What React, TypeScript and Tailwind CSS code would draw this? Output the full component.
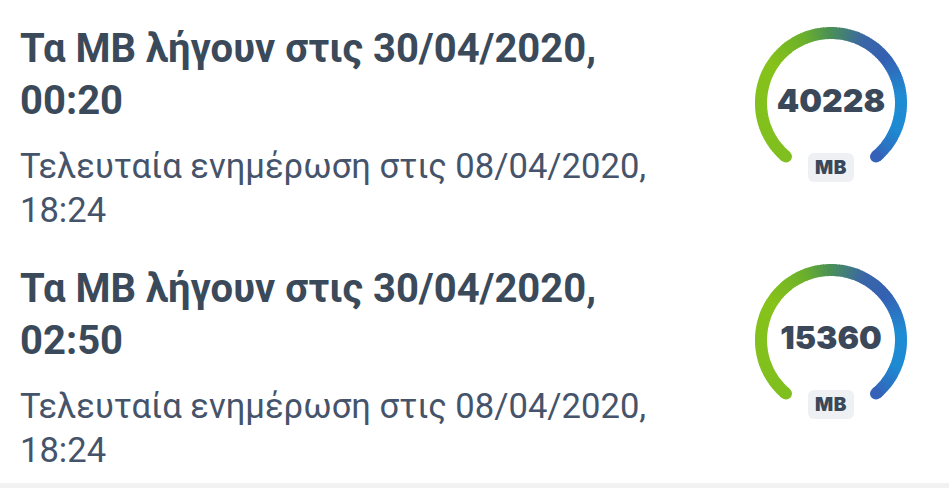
const stops: [number, number[]][] = [
  [0, [127, 191, 31]],
  [0.3, [134, 194, 26]],
  [0.42, [107, 176, 43]],
  [0.5, [74, 143, 88]],
  [0.6, [58, 102, 168]],
  [0.68, [53, 96, 178]],
  [0.8, [30, 140, 212]],
  [0.9, [29, 138, 210]],
  [1, [53, 98, 184]],
];

function colorAt(t: number) {
  for (let i = 1; i < stops.length; i++) {
    const [t1, c1] = stops[i];
    const [t0, c0] = stops[i - 1];
    if (t <= t1) {
      const k = (t - t0) / (t1 - t0);
      const c = c0.map((v, j) => Math.round(v + (c1[j] - v) * k));
      return `rgb(${c[0]},${c[1]},${c[2]})`;
    }
  }
  return 'rgb(53,98,184)';
}

const Gauge = ({ value, top }: { value: string; top: string }) => {
  const cx = 80;
  const cy = 80;
  const r = 70;
  const start = -140;
  const sweep = 280;
  const n = 140;
  const pt = (deg: number) => {
    const a = (deg * Math.PI) / 180;
    return [cx + r * Math.sin(a), cy - r * Math.cos(a)];
  };
  const segs = [];
  for (let i = 0; i < n; i++) {
    const a0 = start + (sweep * i) / n;
    const a1 = start + (sweep * (i + 1)) / n + 0.6;
    const [x0, y0] = pt(a0);
    const [x1, y1] = pt(Math.min(a1, start + sweep));
    segs.push(
      <path
        key={i}
        d={`M ${x0} ${y0} A ${r} ${r} 0 0 1 ${x1} ${y1}`}
        stroke={colorAt((i + 0.5) / n)}
        strokeWidth={12}
        fill="none"
      />
    );
  }
  const [sx, sy] = pt(start);
  const [ex, ey] = pt(start + sweep);

  return (
    <div className={`relative mr-[38px] h-[160px] w-[160px] shrink-0 ${top}`}>
      <svg width="160" height="160" viewBox="0 0 160 160">
        {segs}
        <circle cx={sx} cy={sy} r={6} fill={colorAt(0)} />
        <circle cx={ex} cy={ey} r={6} fill={colorAt(1)} />
      </svg>
      <div className="absolute inset-0 flex items-center justify-center">
        <span className="-translate-y-[2px] font-['Inter',sans-serif] text-[32px] leading-none font-black text-[#3a4859]">
          {value}
        </span>
      </div>
      <div className="absolute top-[130px] left-1/2 flex h-[29px] w-[46px] -translate-x-1/2 items-center justify-center rounded-md bg-[#eef0f3] font-['Inter',sans-serif] text-[19px] leading-none font-black tracking-[0.5px] text-[#3a4859]">
        MB
      </div>
    </div>
  );
};

const Row = ({ expires, value, top }: { expires: string; value: string; top: string }) => (
  <div className="flex h-[240px] items-start justify-between">
    <div className="w-[680px] pt-[23px] pl-[20px] text-[#3b4a5a] font-['Roboto',sans-serif]">
      <div className="text-[40px] leading-[52px] font-bold">Τα MB λήγουν στις {expires}</div>
      <div className="mt-[17px] text-[34.6px] leading-[44px] text-[#45546a]">
        Τελευταία ενημέρωση στις 08/04/2020, 18:24
      </div>
    </div>
    <Gauge value={value} top={top} />
  </div>
);

export default function App() {
  return (
    <div className="h-[488px] w-[949px] overflow-hidden bg-white">
      <Row expires="30/04/2020, 00:20" value="40228" top="mt-[23px]" />
      <Row expires="30/04/2020, 02:50" value="15360" top="mt-[20px]" />
      <div className="mt-[3px] h-[5px] bg-[#f2f2f2]" />
    </div>
  );
}
